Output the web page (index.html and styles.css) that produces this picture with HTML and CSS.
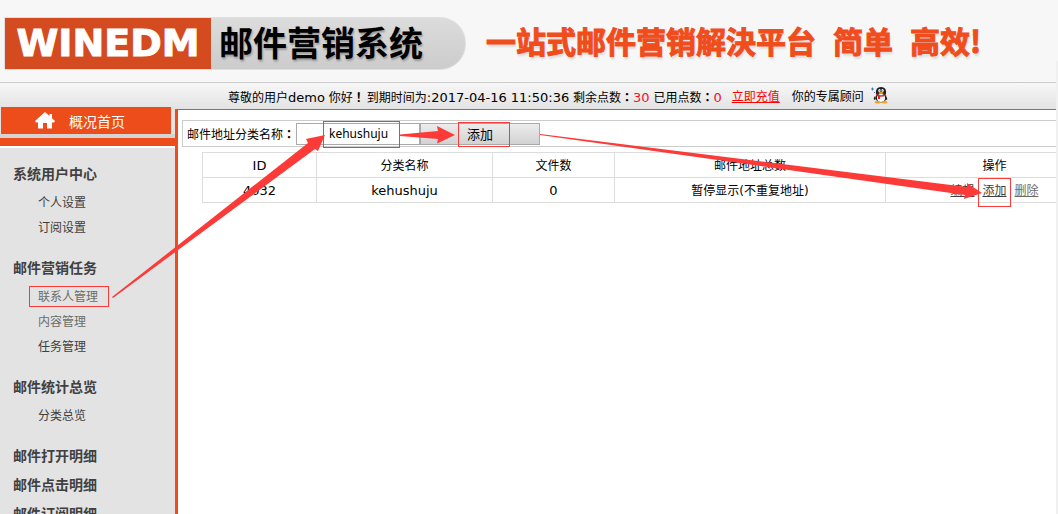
FILE: index.html
```
<!DOCTYPE html>
<html lang="zh-CN">
<head>
    <meta charset="UTF-8">
    <meta name="viewport" content="width=device-width, initial-scale=1.0">
    <title>WINEDM 邮件营销系统</title>
    <link rel="stylesheet" href="styles.css">
</head>
<body>
    <header class="header">
        <div class="logo">
            <span class="logo-name">WINEDM</span>
            <span class="logo-title">邮件营销系统</span>
        </div>
        <div class="slogan">
            <span>一站式邮件营销解決平台</span>
            <span>简单</span>
            <span>高效!</span>
        </div>
    </header>

    <div class="user-bar">
        <span>尊敬的用户<span class="num">demo</span> 你好<span class="colon" lang="zh-TW">！</span></span>
        <span class="account">到期时间为<span class="num">:2017-04-16 11:50:36</span> 剩余点数<span class="colon" lang="zh-TW">：</span><span class="num red">30</span> 已用点数<span class="colon" lang="zh-TW">：</span><span class="num red">0</span></span>
        <a class="recharge" href="#">立即充值</a>
        <span class="advisor">你的专属顾问</span>
        <!-- QQ penguin -->
        <svg class="qq" width="17" height="18" viewBox="0 0 17 18">
            <path d="M0 3h3M1.500 1.500v3M3 6.500h1" stroke="#4a78c8" fill="none"/>
            <path d="M4 10Q2 12 3 14L5 13ZM14 10Q17 12 16 14L14 13Z" fill="#222"/>
            <ellipse cx="10" cy="11.500" rx="5.500" ry="5" fill="#222"/>
            <path d="M5 8Q4 1 10 1T15 8Z" fill="#222"/>
            <ellipse cx="10" cy="12" rx="4" ry="4" fill="#fff"/>
            <ellipse cx="8.500" cy="4.500" rx="1.200" ry="1.600" fill="#fff"/>
            <ellipse cx="11.500" cy="4.500" rx="1.200" ry="1.600" fill="#fff"/>
            <circle cx="9" cy="4.700" r=".5"/>
            <circle cx="11" cy="4.700" r=".5"/>
            <ellipse cx="10" cy="7" rx="2.500" ry="1" fill="#f7a21b"/>
            <path d="M5 8Q10 10.500 15 8v1.500Q12 11 9 10.800V13H7v-2.700L5 9.500Z" fill="#e5201c"/>
            <ellipse cx="6.500" cy="16.300" rx="3" ry="1.300" fill="#f7a21b"/>
            <ellipse cx="13.500" cy="16.300" rx="3" ry="1.300" fill="#f7a21b"/>
        </svg>
    </div>

    <div class="layout">
        <nav class="sidebar">
            <a class="home" href="#">
                <svg width="20" height="17" viewBox="0 0 20 17">
                    <path d="M10 0L0 9l1 1.500h2V16q0 .5.500.5H8V11h4v5.500h4.500q.5 0 .5-.5v-5.500h2L20 9l-3-2.700V2h-2.500v2Z" fill="#fff"/>
                </svg>
                概况首页
            </a>
            <div class="stripe"></div>
            <div class="menu">
                <section class="group">
                    <h2>系统用户中心</h2>
                    <a href="#">个人设置</a>
                    <a href="#">订阅设置</a>
                </section>
                <section class="group">
                    <h2>邮件营销任务</h2>
                    <a class="dim" href="#">联系人管理</a>
                    <a class="dim" href="#">内容管理</a>
                    <a href="#">任务管理</a>
                </section>
                <section class="group">
                    <h2>邮件统计总览</h2>
                    <a href="#">分类总览</a>
                </section>
                <section class="group">
                    <h2>邮件打开明细</h2>
                    <h2>邮件点击明细</h2>
                    <h2>邮件订阅明细</h2>
                </section>
            </div>
        </nav>

        <main class="content">
            <form class="add-form">
                <label for="category">邮件地址分类名称<span class="colon" lang="zh-TW">：</span></label>
                <input id="category" type="text" value="kehushuju">
                <button type="button">添加</button>
            </form>
            <table class="list">
                <colgroup>
                    <col class="col-id">
                    <col class="col-name">
                    <col class="col-files">
                    <col class="col-total">
                    <col class="col-action">
                </colgroup>
                <tr>
                    <th class="num">ID</th>
                    <th>分类名称</th>
                    <th>文件数</th>
                    <th>邮件地址总数</th>
                    <th>操作</th>
                </tr>
                <tr>
                    <td class="num">4032</td>
                    <td class="num">kehushuju</td>
                    <td class="num">0</td>
                    <td>暂停显示(不重复地址)</td>
                    <td>
                        <div class="actions">
                            <a href="#">编辑</a>
                            <a href="#">添加</a>
                            <a class="dim" href="#">删除</a>
                        </div>
                    </td>
                </tr>
            </table>
        </main>
    </div>

    <!-- Step marks: boxes and arrows over the page -->
    <svg class="marks" width="1058" height="514" viewBox="0 0 1058 514">
        <g fill="none" stroke="#fc3a38">
            <rect x="29.500" y="286.500" width="79" height="20"/>
            <rect x="323.500" y="121.500" width="76" height="26"/>
            <rect x="458.500" y="122.500" width="51" height="24"/>
            <rect x="978.500" y="178.500" width="32" height="28"/>
        </g>
        <g fill="#fc3a38">
            <path d="M112 297L308 143L306 139L325 135L318 151L315 149L113 298Z"/>
            <path d="M400 134.500L438 131L437 126L455 135L437 143.500L438 139L400 136Z"/>
            <path d="M540 134L967 187L967 183L982 193L964 199L965 195L540 135Z"/>
        </g>
    </svg>
    <div class="edge"></div>
</body>
</html>
```

FILE: styles.css
```
/* General Page Styling */
* {
    box-sizing: border-box;
}
body {
    display: flex;
    flex-direction: column;
    position: relative;
    height: 100vh;
    margin: 0;
    overflow: hidden;
    background: #fff;
    color: #000;
    font-family: "DejaVu Sans", "Noto Sans CJK SC", sans-serif;
    font-size: 12px;
}
.num {
    font-size: 13px;
}
.red {
    color: #f01030;
}
/* Full-width marks sit in the middle of their cell */
.colon {
    font-family: "Noto Sans CJK TC", sans-serif;
    font-weight: bold;
}

/* Header */
.header {
    display: flex;
    align-items: center;
    flex: none;
    gap: 20px;
    height: 83px;
    padding: 4px 4px 0;
    background: #f7f7f7;
    border-bottom: 1px solid #ccc;
    white-space: nowrap;
}
.logo {
    display: flex;
    width: 462px;
    height: 53px;
    border: 1px solid #e0e0e0;
    border-radius: 0 26px 26px 0;
    background: linear-gradient(#dcdcdc, #ccc);
    line-height: 51px;
    overflow: hidden;
}
.logo-name {
    width: 206px;
    background: #d44b20;
    color: #fff;
    font-family: "DejaVu Sans", sans-serif;
    font-size: 38px;
    font-weight: bold;
    text-align: center;
    -webkit-text-stroke: 1px #fff;
}
.logo-title {
    padding-left: 8px;
    font-family: "Noto Sans CJK SC", sans-serif;
    font-size: 34px;
    font-weight: bold;
    line-height: 47px;
    text-shadow: 1px 2px 2px #999;
}
.slogan {
    display: flex;
    gap: 17px;
    padding-bottom: 6px;
    color: #f04c1c;
    font-family: "Noto Sans CJK SC", sans-serif;
    font-size: 30px;
    font-weight: bold;
    -webkit-text-stroke: 1px #f04c1c;
    text-shadow: 1px 3px 2px #ddd;
}

/* User Bar */
.user-bar {
    display: flex;
    align-items: center;
    flex: none;
    height: 26px;
    padding: 3px 0 0 228px;
    background: linear-gradient(#f7f7f7, #e3e3e3);
    line-height: 23px;
    white-space: nowrap;
}
.account {
    margin-left: 2px;
}
.recharge {
    margin-left: 10px;
    color: #f00;
}
.advisor {
    margin-left: 12px;
}
.qq {
    margin: 0 0 6px 7px;
}

/* Sidebar */
.layout {
    display: flex;
    flex: 1;
    min-height: 0;
}
.sidebar {
    flex: none;
    width: 175px;
    margin-top: -2px;
    background: #e3e3e3;
}
.home {
    display: flex;
    align-items: center;
    gap: 14px;
    height: 27px;
    margin: 0 4px 0 1px;
    padding-left: 34px;
    background: #ed4d1b;
    color: #fff;
    font-size: 14px;
    text-decoration: none;
}
.stripe {
    height: 14px;
    border-top: 4px solid #d4d4d4;
    border-bottom: 2px solid #fff;
    background: #ed4d1b;
}
.menu {
    padding: 12px 0 0 13px;
}
.group {
    margin-bottom: 13px;
}
.group h2 {
    margin: 0;
    color: #404040;
    font-size: 14px;
    line-height: 29px;
}
.group h2 + a {
    margin-top: 2px;
}
.group a {
    display: block;
    padding-left: 25px;
    color: #404040;
    line-height: 25px;
    text-decoration: none;
}
.group .dim,
.actions .dim {
    color: #6c6c66;
}

/* Content */
.content {
    flex: 1;
    min-width: 0;
    padding: 10px 0 0 4px;
    border-top: 1px solid #ed4d1b;
    border-left: 3px solid #ed4d1b;
    overflow: hidden;
}
.add-form {
    display: flex;
    align-items: center;
    height: 27px;
    padding-left: 4px;
    border: 1px solid #ccc;
    border-right: 0;
}
.add-form input {
    width: 124px;
    height: 22px;
    margin-left: 1px;
    padding: 0 0 0 32px;
    border: 1px solid #aaa;
    font-family: "Noto Sans", sans-serif;
    font-size: 12px;
}
.add-form button {
    width: 120px;
    height: 22px;
    padding: 0;
    border: 1px solid #aaa;
    background: linear-gradient(#ececec, #d2d2d2);
    font-family: "Noto Sans CJK SC", sans-serif;
    font-size: 13px;
    line-height: 18px;
}
.list {
    width: calc(100% + 26px);
    margin: 5px 0 0 20px;
    border-collapse: collapse;
    table-layout: fixed;
}
.list th,
.list td {
    height: 25px;
    padding: 2px 0 0;
    border: 1px solid #ddd;
    font-weight: normal;
    line-height: 22px;
    text-align: center;
}
.col-id {
    width: 114px;
}
.col-name {
    width: 176px;
}
.col-files {
    width: 122px;
}
.col-total {
    width: 271px;
}
.actions {
    display: flex;
    justify-content: center;
    gap: 8px;
}
.actions a {
    color: #404040;
}

/* Step Marks */
.marks {
    position: absolute;
    top: 0;
    left: 0;
    pointer-events: none;
}
.edge {
    position: absolute;
    top: 61px;
    right: 0;
    bottom: 0;
    width: 2px;
    background: #f0f0f0;
}
```
